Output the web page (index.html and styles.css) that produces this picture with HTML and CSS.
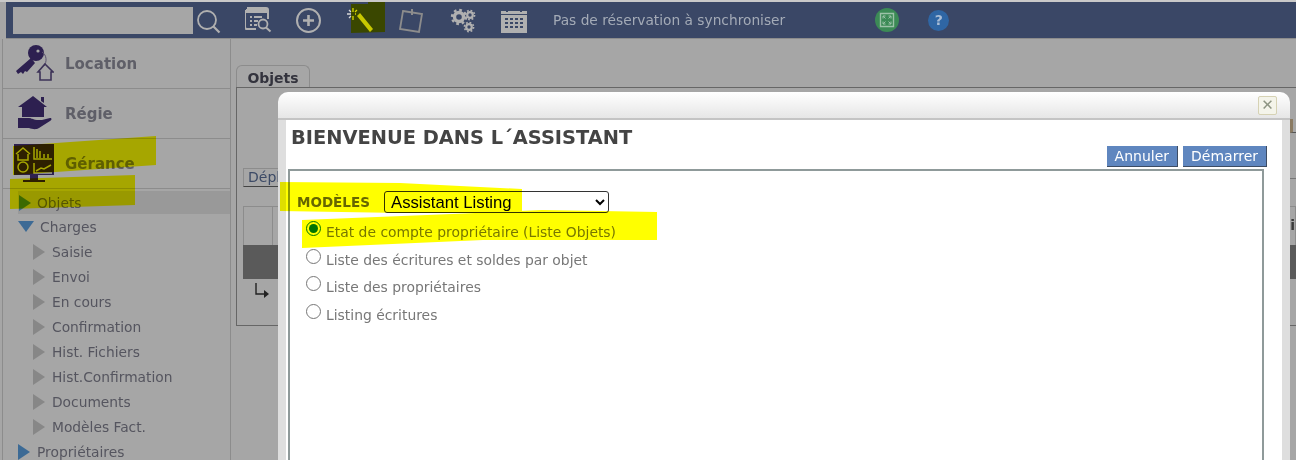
FILE: index.html
```html
<!DOCTYPE html>
<html lang="fr">
<head>
    <meta charset="UTF-8">
    <title>Assistant</title>
    <link rel="stylesheet" href="styles.css">
</head>
<body>
    <div class="topbar">
        <input class="search-input" type="text">
        <svg class="icon-search" width="24" height="26" viewBox="0 0 24 26"><circle cx="10" cy="11" r="9" fill="none" stroke="#b0b0b0" stroke-width="1.8"/><path d="M16.5 17.5l6 6" stroke="#b0b0b0" stroke-width="2.2"/></svg>
        <svg class="tool tool-report" width="27" height="26" viewBox="0 0 27 26"><path d="M2 1h19a2 2 0 0 1 2 2v9M11 22H2a2 2 0 0 1-2-2V3" fill="none" stroke="#b0b0b0" stroke-width="2"/><path d="M1 2h21v4H1z" fill="#b0b0b0"/><path d="M5 9h2v2H5zM9 9h8v2H9zM5 13h2v2H5zM9 13h4v2H9zM5 17h2v2H5zM9 17h3v2H9z" fill="#b0b0b0"/><circle cx="18" cy="17" r="4.5" fill="none" stroke="#b0b0b0" stroke-width="1.8"/><path d="M21 20.5l4.5 4" stroke="#b0b0b0" stroke-width="2"/></svg>
        <svg class="tool tool-plus" width="25" height="25" viewBox="0 0 25 25"><circle cx="12.5" cy="12.5" r="11.5" fill="none" stroke="#b0b0b0" stroke-width="2"/><path d="M7 12.5h11M12.5 7v11" stroke="#b0b0b0" stroke-width="2.6"/></svg>
        <svg class="tool tool-wand" width="26" height="26" viewBox="0 0 26 26"><path d="M10 9l3-3 13 16-3 3z" fill="#c8c8c8"/><path d="M6 1v4M6 9v4M0 7h4M8 7h1M2 3l2 2M10 3l-2 2M2 11l2-2" stroke="#d8d8d8" stroke-width="1.3"/></svg>
        <svg class="tool tool-note" width="25" height="25" viewBox="0 0 25 25"><path d="M4 3l19 3-3 18-19-3z" fill="none" stroke="#8c8c8c" stroke-width="1.8"/><path d="M13 1v6" stroke="#8c8c8c" stroke-width="2"/></svg>
        <svg class="tool tool-gears" width="26" height="25" viewBox="0 0 26 25"><g fill="none" stroke="#b0b0b0"><circle cx="9" cy="9" r="4.5" stroke-width="3.4"/><circle cx="9" cy="9" r="7" stroke-width="2.4" stroke-dasharray="2.7 2.8"/><circle cx="20" cy="7" r="2.8" stroke-width="2.2"/><circle cx="20" cy="7" r="4.6" stroke-width="1.6" stroke-dasharray="1.8 1.8"/><circle cx="19" cy="19" r="2.8" stroke-width="2.2"/><circle cx="19" cy="19" r="4.6" stroke-width="1.6" stroke-dasharray="1.8 1.8"/></g></svg>
        <svg class="tool tool-calendar" width="26" height="25" viewBox="0 0 26 25"><path d="M0 3h26v22H0z" fill="#b0b0b0"/><path d="M5 0h2v4H5zM19 0h2v4h-2zM0 6h26v1H0z" fill="#3a4766"/><path d="M4 10h3v2H4zM9 10h3v2H9zM14 10h3v2h-3zM19 10h3v2h-3zM4 14h3v2H4zM9 14h3v2H9zM14 14h3v2h-3zM19 14h3v2h-3zM4 18h3v2H4zM9 18h3v2H9zM14 18h3v2h-3zM19 18h3v2h-3z" fill="#3a4766"/></svg>
        <span class="sync-text">Pas de réservation à synchroniser</span>
        <svg class="tool-fullscreen" width="24" height="24" viewBox="0 0 24 24"><circle cx="12" cy="12" r="12" fill="#3c8a56"/><path d="M5.5 5.5h13v13h-13z" fill="none" stroke="#9cc2a8" stroke-width="1.4"/><path d="M8 8l2.5 2.5M8 8h2.5M8 8v2.5M16 8l-2.5 2.5M16 8h-2.5M16 8v2.5M8 16l2.5-2.5M8 16h2.5M8 16v-2.5M16 16l-2.5-2.5M16 16h-2.5M16 16v-2.5" fill="none" stroke="#9cc2a8"/></svg>
        <span class="help-btn">?</span>
    </div>

    <div class="main">
        <div class="sidebar">
            <div class="section">
                <svg width="40" height="40" viewBox="0 0 40 40"><circle cx="22" cy="9" r="8" fill="#2d2050"/><circle cx="24" cy="7" r="1.6" fill="#a6a6a6"/><path d="M17 14L2 27l2 3 3-2 2 2 2-3 2 1 8-9z" fill="#2d2050"/><path d="M28 8c5 3 5 10 2 14" fill="none" stroke="#5d5570"/><path d="M31 20l8 8-2 0v8H26v-8h-2z" fill="none" stroke="#3d3358" stroke-width="1.6"/></svg>
                <span class="section-label">Location</span>
            </div>
            <div class="section">
                <svg width="40" height="40" viewBox="0 0 40 40"><path d="M19 2l14 11h-3v10H8V13H4l11-8zM27 3h3v6l-3-2z" fill="#2d2050"/><path d="M4 24h11c3 0 5 2 8 2h5l8-2c2 0 2 2 0 3l-11 7c-3 2-7 1-10 0H4z" fill="#2d2050"/><path d="M17 24c3-1 6 0 8 1" stroke="#a6a6a6" fill="none"/></svg>
                <span class="section-label">Régie</span>
            </div>
            <div class="section">
                <svg width="40" height="40" viewBox="0 0 40 40"><path d="M0 0h40v31H0z" fill="#2d2050"/><path d="M9 36h22v2H9z" fill="#2d2050"/><path d="M16 31h8v5h-8z" fill="#2d2050"/><g fill="none" stroke="#a6a6a6" stroke-width="1.5"><path d="M2 10l7-6 7 6M4 10v6h10v-6"/><circle cx="9" cy="23" r="5"/><path d="M20 3v12h18M23 5v9M26 7v7M30 10v4M34 10v4M20 19v10h18M22 27l5-3 3 1 7-4"/></g></svg>
                <span class="section-label">Gérance</span>
            </div>
            <div class="nav">
                <div class="nav-item selected"><span class="tri-right"></span>Objets</div>
                <div class="nav-item"><span class="tri-down"></span>Charges</div>
                <div class="nav-item sub"><span class="tri-right grey"></span>Saisie</div>
                <div class="nav-item sub"><span class="tri-right grey"></span>Envoi</div>
                <div class="nav-item sub"><span class="tri-right grey"></span>En cours</div>
                <div class="nav-item sub"><span class="tri-right grey"></span>Confirmation</div>
                <div class="nav-item sub"><span class="tri-right grey"></span>Hist. Fichiers</div>
                <div class="nav-item sub"><span class="tri-right grey"></span>Hist.Confirmation</div>
                <div class="nav-item sub"><span class="tri-right grey"></span>Documents</div>
                <div class="nav-item sub"><span class="tri-right grey"></span>Modèles Fact.</div>
                <div class="nav-item"><span class="tri-right"></span>Propriétaires</div>
            </div>
        </div>

        <div class="content">
            <div class="tab">Objets</div>
            <div class="panel">
                <div class="panel-tools"><span class="panel-mark"></span></div>
                <div class="panel-line"></div>
                <div class="panel-btn-row"><span class="panel-btn">Déplacer</span></div>
                <div class="grid-head"><span class="grid-cell"></span><span class="grid-cell"></span><span class="grid-end">i</span></div>
                <div class="grid-row"></div>
                <svg class="grid-arrow" width="16" height="16" viewBox="0 0 16 16"><path d="M2 0v11h8" fill="none" stroke="#222" stroke-width="1.4"/><path d="M10 7l5 4-5 4z" fill="#222"/></svg>
            </div>
        </div>
    </div>

    <div class="modal">
        <div class="modal-head"><span class="close">&#10005;</span></div>
        <div class="modal-body">
            <div class="modal-title">
                <h1>BIENVENUE DANS L´ASSISTANT</h1>
                <div class="actions">
                    <button>Annuler</button>
                    <button>Démarrer</button>
                </div>
            </div>
            <div class="wizard">
                <div class="model-row">
                    <label class="model-label">MODÈLES</label>
                    <select class="model-select"><option>Assistant Listing</option></select>
                </div>
                <label class="choice"><input type="radio" name="model" checked>Etat de compte propriétaire (Liste Objets)</label>
                <label class="choice"><input type="radio" name="model">Liste des écritures et soldes par objet</label>
                <label class="choice"><input type="radio" name="model">Liste des propriétaires</label>
                <label class="choice"><input type="radio" name="model">Listing écritures</label>
            </div>
        </div>
    </div>

    <!-- coups de surligneur -->
    <svg class="marker" width="1296" height="460" viewBox="0 0 1296 460">
        <path d="M351 4l17 0 0-2 17 0 0 30-34 1z"/>
        <path d="M13 146l143-10 0 29-143 10z"/>
        <path d="M10 179l125-4 0 30-125 4z"/>
        <path d="M280 182l120 1 122 6 0 24-120 0-122-2z"/>
        <path d="M302 220l150-6 90-4 115 2 0 28-174 0-181 8z"/>
    </svg>
</body>
</html>
```

FILE: styles.css
```css
html, body {
    margin: 0;
    padding: 0;
}
body {
    width: 1296px;
    height: 460px;
    overflow: hidden;
    position: relative;
    background-color: #a6a6a6;
    border-top: 2px solid #c9c9c9;
    box-sizing: border-box;
    font-family: "DejaVu Sans", sans-serif;
}

/* barre du haut */
.topbar {
    display: flex;
    align-items: center;
    height: 36px;
    margin-left: 6px;
    background-color: #3a4766;
    border-bottom: 1px solid #8c8c8c;
}
.search-input {
    width: 180px;
    height: 27px;
    margin-left: 7px;
    padding: 0;
    border: none;
    background-color: #a6a6a6;
}
.icon-search {
    margin-left: 4px;
    margin-top: 4px;
}
.tool {
    flex: none;
}
.tool-report { margin-left: 24px; }
.tool-plus { margin-left: 24px; }
.tool-wand { margin-left: 26px; }
.tool-note { margin-left: 26px; }
.tool-gears { margin-left: 26px; }
.tool-calendar { margin-left: 25px; }
.sync-text {
    margin-left: 26px;
    font-size: 13.75px;
    color: #a4abb7;
}
.tool-fullscreen {
    margin-left: 90px;
}
.help-btn {
    width: 21px;
    height: 21px;
    margin-left: 29px;
    border-radius: 50%;
    background-color: #2f66a4;
    color: #a9bdd6;
    font-size: 14px;
    font-weight: bold;
    line-height: 21px;
    text-align: center;
}

.main {
    display: flex;
    height: 421px;
    overflow: hidden;
}

/* menu de gauche */
.sidebar {
    flex: none;
    width: 227px;
    margin-left: 2px;
    border-left: 1px solid #8c8c8c;
    border-right: 1px solid #8c8c8c;
}
.section {
    display: flex;
    align-items: center;
    height: 49px;
    padding-left: 11px;
    border-bottom: 1px solid #8c8c8c;
}
.section-label {
    margin-left: 11px;
    font-size: 15px;
    font-weight: bold;
    color: #5f5f68;
}
.nav {
    padding-top: 1px;
}
.nav-item {
    display: flex;
    align-items: center;
    height: 25px;
    padding-left: 15px;
    font-size: 13.8px;
    color: #55555f;
}
.nav-item.selected {
    height: 23px;
    margin: 1px 0 0 15px;
    padding-left: 0;
    background-color: #999999;
}
.nav-item.selected .tri-right {
    margin-left: 1px;
    margin-right: 6px;
}
.nav-item.sub {
    padding-left: 30px;
}
.tri-right {
    flex: none;
    width: 0;
    height: 0;
    margin-right: 7px;
    border-left: 12px solid #3c6a95;
    border-top: 8px solid transparent;
    border-bottom: 8px solid transparent;
}
.tri-right.grey {
    border-left-color: #878787;
}
.tri-down {
    flex: none;
    width: 0;
    height: 0;
    margin-right: 6px;
    border-top: 11px solid #3c6a95;
    border-left: 8px solid transparent;
    border-right: 8px solid transparent;
}

/* contenu derriere la fenetre */
.content {
    flex: 1;
    padding: 26px 0 0 5px;
    min-width: 0;
}
.tab {
    width: 72px;
    height: 21px;
    border: 1px solid #8c8c8c;
    border-bottom: none;
    border-radius: 6px 6px 0 0;
    font-size: 14px;
    font-weight: bold;
    line-height: 24px;
    text-align: center;
    color: #33333d;
}
.panel {
    height: 237px;
    padding-left: 6px;
    border: 1px solid #666666;
    border-right: none;
}
.panel-tools {
    display: flex;
    justify-content: flex-end;
    height: 45px;
}
.panel-mark {
    width: 6px;
    height: 14px;
    margin-top: 31px;
    border-left: 3px solid #8a7a62;
    border-bottom: 1px solid #555555;
    box-sizing: border-box;
}
.panel-line {
    width: 6px;
    height: 1px;
    margin: 45px 0 0 auto;
    background-color: #777777;
}
.panel-btn-row {
    margin-top: -12px;
}
.panel-btn {
    display: inline-block;
    height: 17px;
    padding: 0 4px;
    border: 1px solid #8c8c8c;
    border-bottom-color: #444444;
    font-size: 14px;
    line-height: 17px;
    color: #3c4a66;
}
.grid-head {
    display: flex;
    height: 38px;
    margin-top: 19px;
    border: 1px solid #8c8c8c;
    border-bottom: none;
}
.grid-cell {
    width: 27px;
    border-right: 1px solid #8c8c8c;
    margin-left: 1px;
}
.grid-end {
    margin-left: auto;
    font-size: 14px;
    font-weight: bold;
    line-height: 36px;
    color: #3a3a3a;
}
.grid-row {
    height: 34px;
    background-color: #5a5a5a;
}
.grid-arrow {
    display: block;
    margin: 4px 0 0 11px;
}

/* fenetre de l'assistant */
.modal {
    position: absolute;
    left: 278px;
    top: 90px;
    width: 1012px;
    height: 368px;
    display: flex;
    flex-direction: column;
}
.modal-head {
    flex: none;
    display: flex;
    justify-content: flex-end;
    align-items: center;
    height: 28px;
    padding-right: 13px;
    box-sizing: border-box;
    border-radius: 10px 10px 0 0;
    border-bottom: 2px solid #c4c4c4;
    background: linear-gradient(#ffffff, #e6e6e6);
}
.close {
    width: 17px;
    height: 17px;
    border: 1px solid #d6d2b4;
    border-radius: 2px;
    background-color: #f4f4ea;
    color: #8d9482;
    font-size: 15px;
    font-weight: bold;
    line-height: 17px;
    text-align: center;
}
.modal-body {
    flex: 1;
    min-height: 0;
    display: flex;
    flex-direction: column;
    background-color: #ffffff;
    border-left: 8px solid #dedede;
    border-right: 8px solid #dedede;
    padding: 0 18px 0 2px;
}
.modal-title {
    flex: none;
    position: relative;
    height: 49px;
}
h1 {
    margin: 0;
    padding: 6px 0 0 3px;
    font-size: 19.4px;
    line-height: 24px;
    color: #444444;
}
.actions {
    position: absolute;
    right: -3px;
    top: 26px;
    display: flex;
    gap: 5px;
}
.actions button {
    height: 21px;
    padding: 0 8px;
    border: none;
    border-right: 1px solid #3d4c63;
    border-bottom: 1px solid #3d4c63;
    background-color: #5f86bf;
    color: #ffffff;
    font-family: "DejaVu Sans", sans-serif;
    font-size: 14px;
    line-height: 20px;
}
.wizard {
    flex: 1;
    border: 2px solid #8f9a9a;
    border-bottom: none;
    padding: 20px 0 0 7px;
}
.model-row {
    display: flex;
    align-items: center;
    height: 22px;
}
.model-label {
    width: 87px;
    font-size: 13.5px;
    font-weight: bold;
    color: #666666;
}
.model-select {
    width: 225px;
    height: 22px;
    padding-left: 2px;
    border: 1px solid #333333;
    border-radius: 3px;
    background-color: #ffffff;
    font-family: "Liberation Sans", sans-serif;
    font-size: 16.7px;
}
.choice {
    display: block;
    height: 27.5px;
    padding-left: 9px;
    font-size: 13.9px;
    line-height: 31px;
    color: #777777;
}
.choice:first-of-type {
    margin-top: 4px;
}
.choice input {
    width: 15px;
    height: 15px;
    margin: 0 5px 0 0;
    vertical-align: 1px;
}

/* surligneur par dessus tout */
.marker {
    position: absolute;
    left: 0;
    top: -2px;
    mix-blend-mode: multiply;
    fill: #ffff00;
}
```
